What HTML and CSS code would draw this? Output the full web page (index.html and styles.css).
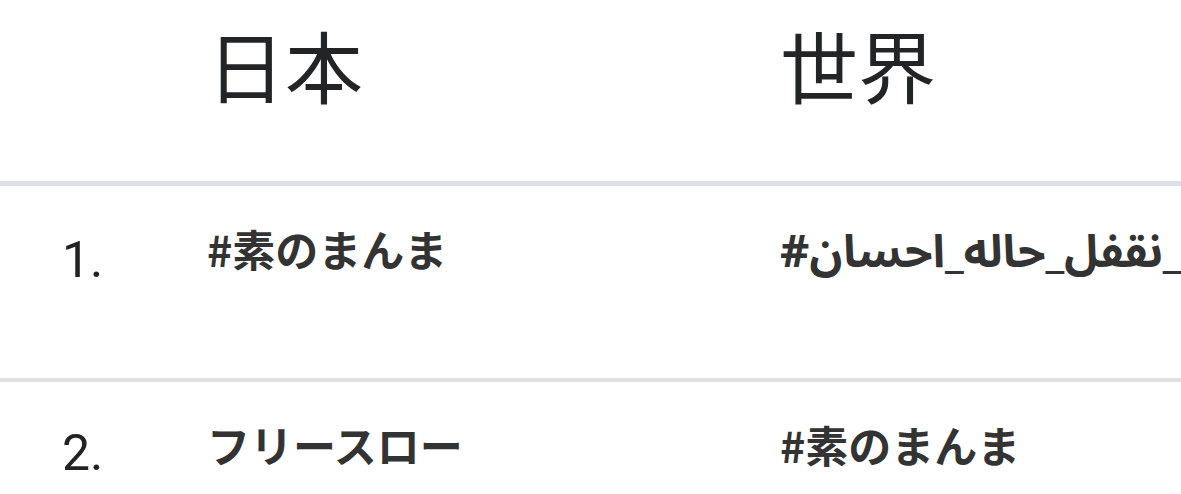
FILE: index.html
```html
<!DOCTYPE html>
<html lang="ja">
<head>
<meta charset="utf-8">
<title>トレンド</title>
<link rel="stylesheet" href="styles.css">
</head>
<body>
<div class="trends">
  <div class="row head">
    <div class="cell num"></div>
    <div class="cell title">日本</div>
    <div class="cell title">世界</div>
  </div>
  <div class="row first">
    <div class="cell num">1.</div>
    <div class="cell tag">#素のまんま</div>
    <div class="cell tag"><span class="ar">#&#x200F;_نقفل_حاله_احسان</span></div>
  </div>
  <div class="row second">
    <div class="cell num">2.</div>
    <div class="cell tag">フリースロー</div>
    <div class="cell tag">#素のまんま</div>
  </div>
</div>
</body>
</html>
```

FILE: styles.css
```css
html, body {
  margin: 0;
  padding: 0;
  background: #ffffff;
}
body {
  font-family: "Noto Sans CJK JP", "Noto Sans", sans-serif;
  color: #212529;
  width: 1181px;
  height: 494px;
  overflow: hidden;
}
.trends {
  display: flex;
  flex-direction: column;
}
.row {
  display: grid;
  grid-template-columns: 207px 573px 1fr;
  align-items: start;
}
.head {
  height: 181px;
  border-bottom: 5px solid #dce1e6;
}
.first {
  height: 192px;
}
.second {
  height: 120px;
  border-top: 4px solid #e1e1e1;
}
.cell {
  white-space: nowrap;
}
.title {
  font-size: 78px;
  line-height: 1;
  font-weight: 400;
  padding-top: 25px;
  color: #222426;
}
.num {
  font-family: Roboto, "Noto Sans", sans-serif;
  font-size: 50px;
  line-height: 1;
  padding-top: 49px;
  padding-left: 62px;
  color: #222;
}
.second .num {
  padding-top: 46px;
}
.tag {
  font-size: 43px;
  line-height: 1;
  font-weight: 700;
  padding-top: 41px;
  color: #333;
}
.ar {
  font-family: "Noto Sans Arabic", "DejaVu Sans", sans-serif;
  font-size: 45.5px;
}
```
